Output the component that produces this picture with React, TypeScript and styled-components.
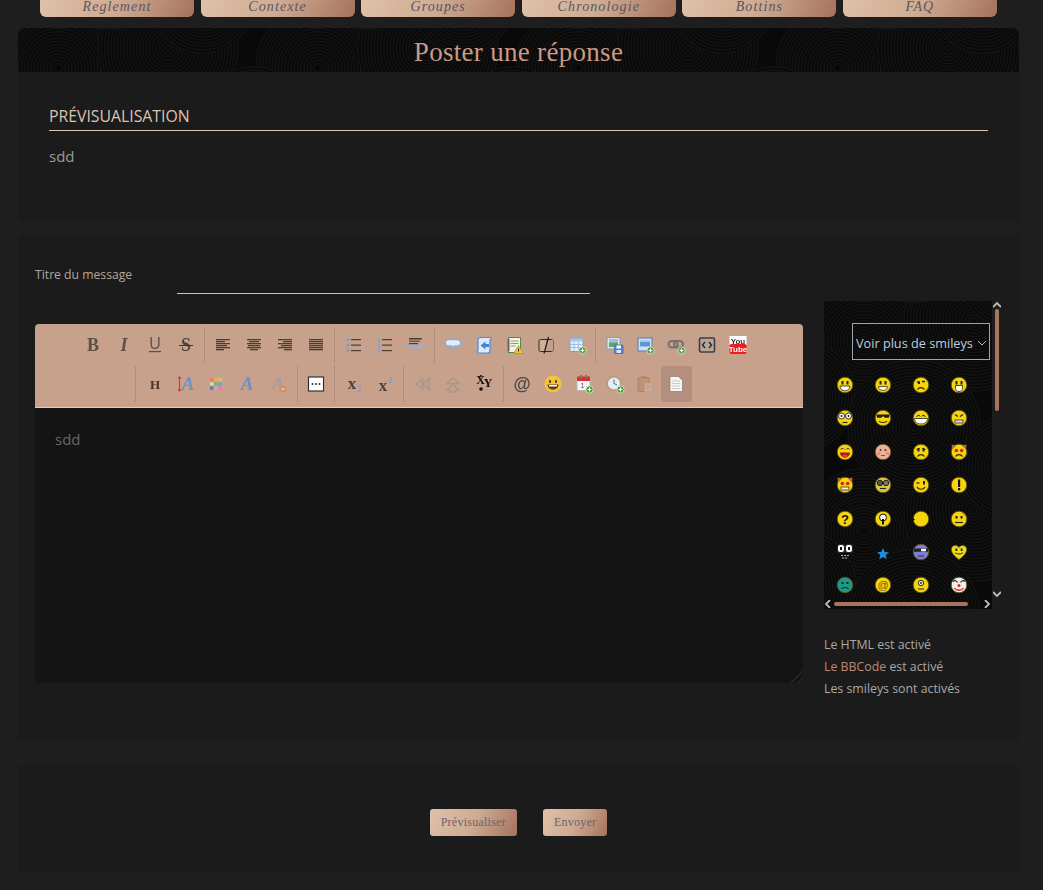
import React from "react";
import styled, { createGlobalStyle, css } from "styled-components";

// fingerprint-like swirls, drawn once and used as a tiled svg background
const swirlTile = (() => {
  const W = 260;
  const H = 190;
  const spots = [
    [40, 40, 62],
    [150, 20, 70],
    [235, 95, 56],
    [90, 125, 66],
    [185, 165, 50],
  ];
  let body = "";
  spots.forEach(([cx, cy, r]) => {
    [-W, 0, W].forEach((dx) => {
      [-H, 0, H].forEach((dy) => {
        body += `<circle cx='${cx + dx}' cy='${cy + dy}' r='${r}' fill='#090909'/>`;
        for (let q = r; q > 2; q -= 3.2) {
          body += `<circle cx='${cx + dx}' cy='${cy + dy}' r='${q}' fill='none' stroke='#141414' stroke-width='1.1'/>`;
        }
      });
    });
  });
  const svg = `<svg xmlns='http://www.w3.org/2000/svg' width='${W}' height='${H}'>${body}</svg>`;
  return `url("data:image/svg+xml,${encodeURIComponent(svg)}")`;
})();

const swirl = css`
  background-color: #090909;
  background-image: ${swirlTile};
`;

const copper = css`
  background: linear-gradient(115deg, #dfc1a9 0%, #cfab93 50%, #a6725c 100%);
`;

const GlobalStyle = createGlobalStyle`
  html, body {
    margin: 0;
    height: 890px;
    overflow: hidden;
    background: #1e1e1e;
    font-family: "Open Sans", "Liberation Sans", sans-serif;
  }
`;

const Page = styled.div`
  margin-top: -7px;
  padding: 0 24px 0 18px;
  display: flex;
  flex-direction: column;
`;

const Nav = styled.nav`
  display: grid;
  grid-template-columns: repeat(6, 154px);
  justify-content: space-between;
  margin: 0 22px 11px;
`;

const NavButton = styled.a`
  ${copper}
  height: 24px;
  border-radius: 0 0 6px 6px;
  text-align: center;
  font: italic 14px/28px "Liberation Serif", serif;
  letter-spacing: 1.1px;
  color: #5a555e;
`;

const Banner = styled.h1`
  ${swirl}
  margin: 0;
  height: 44px;
  border-radius: 6px 6px 0 0;
  text-align: center;
  font: 400 27px/48px "Liberation Serif", serif;
  letter-spacing: 0.3px;
  color: #c99a85;
`;

const Panel = styled.section<{ $height: number; $gap?: number }>`
  height: ${(p) => p.$height}px;
  margin-bottom: ${(p) => p.$gap ?? 0}px;
  background: #1b1b1b;
`;

const PreviewPanel = styled(Panel)`
  padding: 34px 31px 0;
  box-sizing: border-box;
`;

const PreviewTitle = styled.h2`
  margin: 0 0 14px;
  padding-bottom: 4px;
  border-bottom: 1px solid #e0c3ab;
  font-size: 15.8px;
  line-height: 20px;
  font-weight: 400;
  color: #dcc4ae;
`;

const PreviewBody = styled.p`
  margin: 0;
  font-size: 15px;
  line-height: 22px;
  color: #9a9a9a;
`;

const FormPanel = styled(Panel)`
  padding: 31px 17px 0;
  box-sizing: border-box;
`;

const TitleRow = styled.div`
  display: flex;
  align-items: flex-start;
  height: 37px;
`;

const TitleLabel = styled.label`
  width: 142px;
  font-size: 12.2px;
  line-height: 20px;
  color: #b5a89a;
`;

const TitleInput = styled.input`
  width: 413px;
  height: 29px;
  box-sizing: border-box;
  padding: 0;
  border: 0;
  border-bottom: 1px solid #c9c2bb;
  background: transparent;
  outline: none;
`;

const Columns = styled.div`
  display: flex;
  align-items: flex-start;
`;

const Editor = styled.div`
  width: 768px;
  margin-top: 22px;
  margin-right: 21px;
`;

const Toolbar = styled.div`
  height: 84px;
  box-sizing: border-box;
  padding: 3px 8px 0 0;
  background: #c8a18c;
  border-radius: 4px 4px 0 0;
  border-bottom: 1px solid #d9cfc9;
  display: flex;
  flex-direction: column;
  gap: 3px;
`;

const ToolRow = styled.div`
  height: 36px;
  display: flex;
  justify-content: center;
`;

const ToolGroup = styled.div<{ $first?: boolean }>`
  display: flex;
  padding: 0 3px;
  border-left: 1px solid ${(p) => (p.$first ? "transparent" : "#b08d7b")};
`;

const ToolButton = styled.a<{ $active?: boolean }>`
  width: 30.85px;
  height: 36px;
  display: flex;
  align-items: center;
  justify-content: center;
  border-radius: 3px;
  background: ${(p) => (p.$active ? "#b58f7d" : "transparent")};
`;

const Glyph = styled.svg<{ $fade?: number }>`
  width: 20px;
  height: 20px;
  opacity: ${(p) => p.$fade ?? 1};
  filter: blur(0.35px);
`;

const EditorArea = styled.textarea`
  display: block;
  width: 100%;
  height: 275px;
  box-sizing: border-box;
  padding: 22px 20px;
  border: 0;
  outline: none;
  background: #141414;
  color: #666;
  font-family: "Open Sans", sans-serif;
  font-size: 15px;
  line-height: 18px;

  &::-webkit-resizer {
    background: linear-gradient(135deg, transparent 55%, #222 55% 65%, transparent 65% 78%, #222 78% 88%, transparent 88%);
  }
`;

const Side = styled.aside`
  width: 178px;
  margin-top: -1px;
`;

const SmileyFrame = styled.div`
  ${swirl}
  height: 308px;
  display: grid;
  grid-template-columns: 168px 10px;
  grid-template-rows: 297px 11px;
`;

const SmileyPane = styled.div`
  padding: 22px 0 0 0;
  overflow: hidden;
`;

const MoreSelect = styled.div`
  width: 138px;
  height: 37px;
  margin-left: 28px;
  box-sizing: border-box;
  border: 1px solid #a5a5a5;
  padding: 2px 3px 0;
  display: flex;
  align-items: center;
  justify-content: space-between;
  font-size: 12.7px;
  color: #bcd0de;
  white-space: nowrap;
`;

const SmileyGrid = styled.div`
  margin: 17px 0 0 13px;
  display: grid;
  grid-template-columns: repeat(4, 16px);
  grid-auto-rows: 16px;
  column-gap: 22px;
  row-gap: 17.4px;
`;

const SmileySvg = styled.svg`
  width: 18px;
  height: 18px;
  margin: -1px;
  display: block;
`;

const VTrack = styled.div`
  background: #1c1c1c;
  display: flex;
  flex-direction: column;
  align-items: center;
  justify-content: space-between;
`;

const VThumb = styled.div`
  width: 4px;
  height: 102px;
  margin: 0 0 auto;
  border-radius: 2px;
  background: #a8745f;
`;

const HTrack = styled.div`
  display: flex;
  align-items: center;
  padding-right: 1px;
  gap: 2px;
`;

const HThumb = styled.div`
  width: 134px;
  height: 4px;
  border-radius: 2px;
  background: #a8745f;
`;

const Corner = styled.div`
  background: #1c1c1c;
`;

const Arrow = styled.svg<{ $thin?: boolean; $end?: boolean }>`
  width: 8px;
  height: 8px;
  flex: none;
  fill: none;
  stroke: #bdbdbd;
  stroke-width: ${(p) => (p.$thin ? 1 : 1.8)};
  margin-left: ${(p) => (p.$end ? "auto" : "0")};
`;

const Status = styled.div`
  margin-top: 25px;
  font-size: 12.35px;
  line-height: 22px;
  color: #a9a9a9;
`;

const StatusLink = styled.span`
  color: #b98a7a;
`;

const ActionsPanel = styled(Panel)`
  padding-top: 43px;
  box-sizing: border-box;
  display: flex;
  align-items: flex-start;
  justify-content: center;
  gap: 26px;
`;

const ActionButton = styled.button`
  ${copper}
  height: 27px;
  padding: 0 11px;
  border: 0;
  border-radius: 3px;
  font: 400 12px/27px "Liberation Serif", serif;
  letter-spacing: 0.25px;
  color: #6b6468;
`;

const navItems = ["Reglement", "Contexte", "Groupes", "Chronologie", "Bottins", "FAQ"];

const Lines = ({ rows, color = "#4d3d35" }: { rows: [number, number][]; color?: string }) => (
  <>
    {rows.map(([x, w], i) => (
      <rect key={i} x={x} y={4 + i * 2} width={w} height={1.3} fill={color} />
    ))}
  </>
);

const Plus = () => (
  <>
    <circle cx="15.5" cy="15.5" r="3.6" fill="#4f9a3d" stroke="#e8f2e0" strokeWidth=".7" />
    <path d="M13.6 15.5h3.8M15.5 13.6v3.8" stroke="#fff" strokeWidth="1.1" />
  </>
);

const Serif = ({ c, x = 10, y = 15.5, size = 17, italic, color = "#3a3533" }: { c: string; x?: number; y?: number; size?: number; italic?: boolean; color?: string }) => (
  <text x={x} y={y} textAnchor="middle" fontFamily="Liberation Serif, serif" fontWeight="700" fontStyle={italic ? "italic" : "normal"} fontSize={size} fill={color}>
    {c}
  </text>
);

const full: [number, number] = [3, 14];
const alignRows = {
  left: [full, [3, 9], full, [3, 11], full, [3, 8]] as [number, number][],
  center: [full, [5, 10], full, [4, 12], full, [6, 8]] as [number, number][],
  right: [full, [8, 9], full, [6, 11], full, [9, 8]] as [number, number][],
  justify: [full, full, full, full, full, full] as [number, number][],
};

type Tool = { key: string; fade?: number; active?: boolean; draw: React.ReactNode };

const groupsRowOne: Tool[][] = [
  [
    { key: "bold", fade: 0.75, draw: <Serif c="B" size={18} /> },
    { key: "italic", fade: 0.75, draw: <Serif c="I" size={18} italic /> },
    { key: "underline", fade: 0.8, draw: <><text x="10" y="14" textAnchor="middle" fontFamily="Liberation Sans, sans-serif" fontSize="16" fill="#4a4441">U</text><rect x="4" y="16" width="12" height="1.2" fill="#3f3a38" /></> },
    { key: "strike", fade: 0.85, draw: <><Serif c="S" size={18} /><rect x="3" y="10" width="14" height="1" fill="#2a2624" /></> },
  ],
  [
    { key: "left", draw: <Lines rows={alignRows.left} /> },
    { key: "center", draw: <Lines rows={alignRows.center} /> },
    { key: "right", draw: <Lines rows={alignRows.right} /> },
    { key: "justify", draw: <Lines rows={alignRows.justify} /> },
  ],
  [
    { key: "bullets", draw: <><rect x="7" y="4" width="10" height="1.2" fill="#4d3d35" /><rect x="7" y="9.5" width="10" height="1.2" fill="#4d3d35" /><rect x="7" y="15" width="10" height="1.2" fill="#4d3d35" /><circle cx="4" cy="4.6" r="1.5" fill="#7d9bd0" /><circle cx="4" cy="10" r="1.5" fill="#7d9bd0" /><rect x="2.5" y="14" width="3" height="3" fill="#7d9bd0" /></> },
    { key: "numbers", draw: <><rect x="7" y="4" width="10" height="1.2" fill="#4d3d35" /><rect x="7" y="9.5" width="10" height="1.2" fill="#4d3d35" /><rect x="7" y="15" width="10" height="1.2" fill="#4d3d35" /><rect x="3" y="2.5" width="2" height="5" fill="#8aa0c8" /><rect x="3" y="8.5" width="2.4" height="4" fill="#8aa0c8" /><rect x="3" y="14" width="2.4" height="4" fill="#8aa0c8" /></> },
    { key: "rule", draw: <><rect x="3" y="3" width="13" height="1.5" fill="#4d3d35" /><rect x="3" y="5.5" width="11" height="1.5" fill="#6a5a50" /><rect x="3" y="8" width="9" height="1.2" fill="#4d3d35" /><rect x="2" y="10.5" width="15" height="2.6" rx=".6" fill="#8fb3e0" /></> },
  ],
  [
    { key: "quote", draw: <path d="M6 4.500h8c2 0 3.500 1.200 3.500 3.200S16 11 14 11h-2.500L9 14.500V11H6C4 11 2.500 9.700 2.500 7.700S4 4.500 6 4.500z" fill="#e4eefa" stroke="#86aedf" strokeWidth="1.300" /> },
    { key: "script", draw: <><path d="M6 2.500h10c1.500 0 1.500 2.500 0 2.500v11c0 1.400-1 2-2 2H4c-1 0-1.600-1.800 0-2.300V5c0-1.500 1-2.500 2-2.500z" fill="#dce9f8" stroke="#4d8ad4" strokeWidth="1.200" /><path d="M11.500 6.500 6.500 10.500l5 4V12h3.500V9h-3.500z" fill="#3d84dc" /></> },
    { key: "warn", draw: <><rect x="3.5" y="2.5" width="12" height="15" fill="#f2f4e4" stroke="#4f8a50" /><path d="M5.5 6h8M5.5 8.5h8M5.5 11h5" stroke="#8aa070" /><rect x="2.5" y="4" width="2" height="12" fill="#666" /><path d="M13.5 10.5 18.5 18.5h-10z" fill="#e8c830" stroke="#a08a20" strokeWidth=".6" /><rect x="13" y="13.5" width="1" height="3" fill="#333" /></> },
    { key: "note", draw: <><rect x="3" y="4.5" width="14" height="12" rx="1.5" fill="#cfae9a" stroke="#2e2a28" /><rect x="10" y="5" width="7" height="11" fill="#c4a08c" /><path d="M12.5 2 8 18.5" stroke="#1c1a19" strokeWidth="1.2" /></> },
    { key: "table", draw: <><rect x="3" y="3.5" width="13" height="13" fill="#e4eef8" stroke="#7aa0cc" /><rect x="3" y="3.5" width="13" height="3" fill="#a9c6e6" /><path d="M3 9.5h13M3 12.5h13M7 6.5v10M11.5 6.5v10" stroke="#8fb0d0" strokeWidth=".7" /><Plus /></> },
  ],
  [
    { key: "image", draw: <><rect x="2" y="2.5" width="13" height="11.5" fill="#d9e6f0" stroke="#7f9fc0" /><rect x="4" y="4.5" width="9" height="7.5" fill="#6aa060" /><rect x="4" y="4.5" width="9" height="3" fill="#9cc4e4" /><rect x="9.5" y="10" width="8.5" height="8.5" rx=".6" fill="#4d88d0" stroke="#2f5f9f" strokeWidth=".6" /><rect x="11.5" y="10.5" width="4.5" height="3" fill="#fff" /><rect x="11.5" y="15" width="4.5" height="3" fill="#dbe7f4" /></> },
    { key: "picture", draw: <><rect x="3" y="3" width="14" height="13" fill="#cfe0f2" stroke="#4f7fb8" /><rect x="5" y="5" width="10" height="6.5" fill="#5f96d0" /><rect x="5" y="5" width="10" height="2" fill="#a8cdf0" /><Plus /></> },
    { key: "link", draw: <><rect x="2.5" y="6" width="9" height="6.5" rx="3.2" fill="none" stroke="#77706e" strokeWidth="2" /><rect x="8" y="6" width="9" height="6.5" rx="3.2" fill="none" stroke="#77706e" strokeWidth="2" /><Plus /></> },
    { key: "code", draw: <><rect x="2.5" y="3" width="15" height="14" rx="1.5" fill="#b9a598" stroke="#3b3f44" strokeWidth="1.6" /><path d="M8 7 5.5 10 8 13M12 7l2.500 3-2.500 3" fill="none" stroke="#203040" strokeWidth="1.500" /></> },
    { key: "youtube", draw: <><rect x="1.5" y="1" width="17" height="9" fill="#fff" /><text x="10" y="8.6" textAnchor="middle" fontFamily="Liberation Sans, sans-serif" fontWeight="700" fontSize="8" fill="#333">You</text><rect x="1.5" y="9" width="17" height="10" rx="2" fill="#ee1c1c" /><text x="10" y="16.8" textAnchor="middle" fontFamily="Liberation Sans, sans-serif" fontWeight="700" fontSize="8" fill="#fff">Tube</text></> },
  ],
];

const groupsRowTwo: Tool[][] = [
  [
    { key: "heading", draw: <Serif c="H" size={13} y={14.5} color="#4a3529" /> },
    { key: "size", draw: <><Serif c="A" x={12} size={19} italic color="#6d8fd0" /><path d="M3.5 3v14M2 4.5 3.5 3 5 4.5M2 15.5 3.5 17 5 15.5" stroke="#e8302c" strokeWidth="1.1" fill="none" /></> },
    { key: "palette", draw: <>{["#ee7d70", "#eeaa66", "#ddc45a", "#d8dc9c", "#66c078", "#60a8dc", "#5f7fb0", "#d99cc8", "#ee7aa8"].map((c, i) => <rect key={c} x={4 + (i % 3) * 4.2} y={4 + Math.floor(i / 3) * 4.2} width="3.4" height="3.4" fill={c} />)}</> },
    { key: "font", draw: <Serif c="A" size={19} italic color="#6d8fd0" /> },
    { key: "clear", draw: <><Serif c="A" size={19} italic color="#ab9aa0" /><circle cx="15" cy="15" r="3.4" fill="#d98a5a" /><rect x="13.2" y="14.5" width="3.6" height="1" fill="#f3e3d8" /></> },
  ],
  [
    { key: "more", draw: <><rect x="2.5" y="3" width="15" height="14" fill="#fff" stroke="#333" strokeWidth="1.2" /><circle cx="6.5" cy="10" r="1" fill="#333" /><circle cx="10" cy="10" r="1" fill="#333" /><circle cx="13.5" cy="10" r="1" fill="#333" /></> },
  ],
  [
    { key: "sub", draw: <><Serif c="x" x={8} y={14.5} size={17} color="#4a4442" /><Serif c="2" x={15.5} y={18} size={9} color="#7d9bd0" /></> },
    { key: "sup", draw: <><Serif c="x" x={8} y={16.5} size={17} color="#4a4442" /><Serif c="2" x={15.5} y={9} size={9} color="#7d9bd0" /></> },
  ],
  [
    { key: "ltr", fade: 0.6, draw: <path d="M9.5 4 3.5 10l6 6V4zM16 4l-6 6 6 6V4z" fill="none" stroke="#9a9088" strokeWidth="1.5" /> },
    { key: "rtl", fade: 0.6, draw: <path d="M10 3.500 4 9.500h12L10 3.500zM10 10l-6 6h3v2h6v-2h3l-6-6z" fill="none" stroke="#9a9088" strokeWidth="1.500" /> },
    { key: "xy", draw: <><Serif c="X" x={6.500} y={10} size={12} color="#111" /><Serif c="Y" x={14} y={12.500} size={12} color="#111" /><circle cx="7" cy="15" r="1.800" fill="#111" /><circle cx="7" cy="2" r="1" fill="#111" /></> },
  ],
  [
    { key: "at", draw: <text x="10" y="15.500" textAnchor="middle" fontFamily="Liberation Sans, sans-serif" fontWeight="700" fontSize="17.500" fill="#4a4a4a">@</text> },
    { key: "smile", draw: <><circle cx="10" cy="10" r="8.500" fill="#f7c33a" /><ellipse cx="7" cy="7.500" rx="1" ry="1.700" fill="#4a3a20" /><ellipse cx="13" cy="7.500" rx="1" ry="1.700" fill="#4a3a20" /><path d="M4.500 10.500h11c0 3.500-2.500 5-5.500 5s-5.500-1.500-5.500-5z" fill="#5a3d1c" /><path d="M6 11h8v1.500H6z" fill="#fff" /></> },
    { key: "calendar", draw: <><rect x="3" y="3.500" width="13" height="13" fill="#f4f4f4" stroke="#b8b8b8" /><rect x="3" y="2.500" width="13" height="4.500" fill="#dd2c2c" /><rect x="6" y="1" width="2" height="3.500" fill="#777" /><rect x="11" y="1" width="2" height="3.500" fill="#777" /><text x="8.500" y="14" textAnchor="middle" fontFamily="Liberation Sans, sans-serif" fontSize="7" fill="#555">1</text><Plus /></> },
    { key: "clock", draw: <><circle cx="9" cy="9.500" r="6.800" fill="#e4eef7" stroke="#b79a6a" strokeWidth="1.400" /><path d="M9 5.500v4l3 1.500" fill="none" stroke="#5f86b8" strokeWidth="1.200" /><Plus /></> },
    { key: "paste", fade: 0.85, draw: <><rect x="3" y="3.500" width="11" height="14" rx="1" fill="#c09070" stroke="#a87a5c" /><rect x="6" y="2" width="5" height="3" fill="#a98a74" /><rect x="9.500" y="9" width="8" height="9" fill="#d0ae9c" stroke="#b39a8c" strokeWidth=".700" /><path d="M11 12h5M11 14h5" stroke="#ac9284" strokeWidth=".700" /></> },
    { key: "document", active: true, draw: <><path d="M4 2.500h8.500L16.500 6.500V17.500H4z" fill="#f4f4f4" stroke="#8a7a72" strokeWidth=".700" /><path d="M6 7h8M6 9.500h8M6 12h8M6 14.500h8" stroke="#c2c2c2" strokeWidth=".800" /></> },
  ],
];

const Face = ({ fill = "#f5d60a", children }: { fill?: string; children?: React.ReactNode }) => (
  <>
    <circle cx="9" cy="9" r="7.800" fill={fill} stroke="#5d4d12" strokeWidth=".900" />
    {children}
  </>
);

const dots = (
  <>
    <rect x="5.500" y="5" width="2" height="3.500" fill="#222" />
    <rect x="10.500" y="5" width="2" height="3.500" fill="#222" />
  </>
);
const grin = <path d="M4 10h10c0 3-2.300 4.800-5 4.800S4 13 4 10z" fill="#fff" stroke="#222" strokeWidth=".800" />;
const frown = <path d="M5.500 13.500c1.500-2.500 5.500-2.500 7 0" fill="none" stroke="#222" strokeWidth="1.200" />;
const redEyes = (
  <>
    <circle cx="6.300" cy="7.500" r="1.800" fill="#d8201c" />
    <circle cx="11.700" cy="7.500" r="1.800" fill="#d8201c" />
  </>
);
const horns = <path d="M1.500 1.500 2 7 6 2.500zM16.500 1.500 16 7 12 2.500z" fill="#a8703a" />;
const smileyList: React.ReactNode[] = [
  <Face>{dots}{grin}</Face>,
  <Face>{dots}<path d="M4.500 10.500h9c0 2.500-2 4-4.500 4s-4.500-1.500-4.500-4z" fill="#f4f4e8" stroke="#222" strokeWidth=".700" /></Face>,
  <Face><path d="M5 6h3M10 5.500h3" stroke="#222" strokeWidth="1.400" /><rect x="6" y="6" width="2" height="2" fill="#222" />{frown}</Face>,
  <Face>{dots}<path d="M5.500 9.500h7v3c0 1.800-1.500 3-3.500 3s-3.500-1.200-3.500-3z" fill="#fff" stroke="#222" strokeWidth=".800" /></Face>,
  <Face><circle cx="5.500" cy="7" r="3" fill="#fff" stroke="#333" /><circle cx="12.500" cy="7" r="3" fill="#fff" stroke="#333" /><circle cx="5.500" cy="7" r=".900" fill="#111" /><circle cx="12.500" cy="7" r=".900" fill="#111" /><path d="M6.500 13.500h5" stroke="#222" strokeWidth="1.100" /></Face>,
  <Face><path d="M2.500 5.500h13l-.5 3.300H11l-2-1.500-2 1.500H3z" fill="#1c1c1c" /><path d="M5 12c1.500 2 6.500 2 8 0" fill="none" stroke="#222" strokeWidth="1.200" /></Face>,
  <Face><path d="M4.500 7.500 7 6l1 1.500M10 7.500 11 6l2.500 1.500" fill="none" stroke="#222" strokeWidth="1" /><path d="M2.500 9.500h13c0 3.500-3 5.500-6.500 5.500s-6.500-2-6.500-5.500z" fill="#fff" stroke="#222" strokeWidth=".800" /></Face>,
  <Face><path d="M5 5.500 8 7.500M13 5.500 10 7.500" stroke="#222" strokeWidth="1.200" /><rect x="5" y="11" width="8" height="3" fill="#ddd" stroke="#222" strokeWidth=".700" /></Face>,
  <Face><path d="M4.500 6.500c1-1.500 2.500-1.500 3.500 0M10 6.500c1-1.500 2.500-1.500 3.500 0" fill="none" stroke="#222" /><path d="M4 9.500h10c0 2.800-2.300 5-5 5s-5-2.200-5-5z" fill="#a81818" /><ellipse cx="9" cy="13" rx="2.800" ry="1.800" fill="#ee3322" /></Face>,
  <Face fill="#eeb29a"><circle cx="6.500" cy="7" r="1" fill="#333" /><circle cx="11.500" cy="7" r="1" fill="#333" /><circle cx="4.500" cy="10.500" r="1.800" fill="#e88a7c" /><circle cx="13.500" cy="10.500" r="1.800" fill="#e88a7c" /><path d="M7 12.500h4" stroke="#8a4a3a" /></Face>,
  <Face><path d="M4.500 6.500 7.500 5.500M13.500 6.500 10.500 5.500" stroke="#222" strokeWidth="1" />{dots}{frown}</Face>,
  <><Face>{redEyes}{frown}</Face>{horns}</>,
  <><Face>{redEyes}<rect x="5" y="11" width="8" height="3" fill="#eee" stroke="#222" strokeWidth=".700" /></Face>{horns}</>,
  <Face fill="#d8c83c"><circle cx="6" cy="7" r="2.700" fill="#555" stroke="#222" /><circle cx="12" cy="7" r="2.700" fill="#777" stroke="#222" /><path d="M6 12.500h6" stroke="#222" strokeWidth="1.100" /></Face>,
  <Face><path d="M4.500 7h3" stroke="#222" strokeWidth="1.200" /><rect x="11" y="5" width="2" height="3.500" fill="#222" /><path d="M5 11c1.500 3 6.500 3 8 0" fill="none" stroke="#222" strokeWidth="1.200" /></Face>,
  <Face><rect x="8" y="3.500" width="2.200" height="7.500" fill="#111" /><rect x="8" y="12" width="2.200" height="2.400" fill="#111" /></Face>,
  <Face><text x="9" y="14" textAnchor="middle" fontFamily="Liberation Sans, sans-serif" fontWeight="700" fontSize="13" fill="#111">?</text></Face>,
  <Face><circle cx="9" cy="7.500" r="3.500" fill="#f4f4f4" stroke="#111" /><rect x="8" y="9" width="2" height="5.500" fill="#111" /></Face>,
  <Face><path d="M.8 8 3 9.500.8 11z" fill="#111" /></Face>,
  <Face><rect x="5.500" y="6" width="2" height="2.500" fill="#222" /><rect x="10.500" y="6" width="2" height="2.500" fill="#222" /><path d="M5 12.500h8" stroke="#222" strokeWidth="1.200" /><path d="M12.500 3.500l2 1.500" stroke="#a58a20" /></Face>,
  <><rect x="1.500" y="1.500" width="7" height="8" rx="2.500" fill="#fff" stroke="#222" /><rect x="9.500" y="1.500" width="7" height="8" rx="2.500" fill="#fff" stroke="#222" /><rect x="4" y="4" width="2" height="3" fill="#111" /><rect x="12" y="4" width="2" height="3" fill="#111" /><path d="M5 12.500h2M8 12.500h2M11 12.500h2M6 15h2M9 15h2" stroke="#bbb" strokeWidth="1.200" /></>,
  <path d="m9 5 1.700 4 4.300.3-3.300 2.700 1.100 4.200L9 14l-3.800 2.200 1.100-4.200L3 9.300l4.300-.3z" fill="#1e8fe0" />,
  <Face fill="#7d7dd8"><path d="M2 5.500h14v3.300H2z" fill="#222" /><rect x="9" y="5.800" width="5" height="2.500" fill="#fff" /><path d="M6 13h6" stroke="#333" strokeWidth="1.100" /></Face>,
  <><path d="M9 16.500C2 11.500 1 8 1.500 5.500 2.200 2 7 1.500 9 4.500c2-3 6.800-2.500 7.500 1C17 8 16 11.500 9 16.500z" fill="#eedb14" stroke="#6d5a14" strokeWidth=".700" /><rect x="5.500" y="5.500" width="1.800" height="2.500" fill="#222" /><rect x="10.700" y="5.500" width="1.800" height="2.500" fill="#222" /><path d="M5 9.500c1.500 2 6.500 2 8 0" fill="none" stroke="#222" /></>,
  <Face fill="#1f9a82"><rect x="5.500" y="6" width="2" height="2" fill="#123" /><rect x="10.500" y="6" width="2" height="2" fill="#123" /><path d="M5.500 13c1.500-2 5.500-2 7 0" fill="none" stroke="#123" strokeWidth="1.100" /></Face>,
  <Face><text x="9" y="13" textAnchor="middle" fontFamily="Liberation Sans, sans-serif" fontSize="11" fill="#6a5a10">@</text></Face>,
  <Face><circle cx="9" cy="7" r="2.700" fill="#e8e8c0" stroke="#333" /><circle cx="9" cy="7" r="1" fill="#333" /><path d="M6 13h6" stroke="#333" strokeWidth="1.100" /></Face>,
  <Face fill="#eeeeee"><path d="M3 5.500c2-1.500 3.500-1 4.500 1M15 5.500c-2-1.500-3.500-1-4.500 1" fill="none" stroke="#222" strokeWidth="1.100" /><circle cx="9" cy="9.500" r="1.500" fill="#d8201c" /><path d="M4.500 12c2 3 7 3 9 0" fill="none" stroke="#d8201c" strokeWidth="1.300" /></Face>,
];

const renderTools = (groups: Tool[][], firstVisible: boolean) =>
  groups.map((tools, g) => (
    <ToolGroup key={tools[0].key} $first={g === 0 && !firstVisible}>
      {tools.map((t) => (
        <ToolButton key={t.key} $active={t.active} title={t.key}>
          <Glyph viewBox="0 0 20 20" $fade={t.fade}>{t.draw}</Glyph>
        </ToolButton>
      ))}
    </ToolGroup>
  ));

const App: React.FC = () => {
  return (
    <Page>
      <GlobalStyle />
      <Nav>
        {navItems.map((item) => (
          <NavButton key={item}>{item}</NavButton>
        ))}
      </Nav>
      <Banner>Poster une réponse</Banner>
      <PreviewPanel $height={150} $gap={12}>
        <PreviewTitle>PRÉVISUALISATION</PreviewTitle>
        <PreviewBody>sdd</PreviewBody>
      </PreviewPanel>
      <FormPanel $height={506} $gap={26}>
        <TitleRow>
          <TitleLabel>Titre du message</TitleLabel>
          <TitleInput type="text" />
        </TitleRow>
        <Columns>
          <Editor>
            <Toolbar>
              <ToolRow>{renderTools(groupsRowOne, false)}</ToolRow>
              <ToolRow>{renderTools(groupsRowTwo, true)}</ToolRow>
            </Toolbar>
            <EditorArea defaultValue="sdd" />
          </Editor>
          <Side>
            <SmileyFrame>
              <SmileyPane>
                <MoreSelect>
                  Voir plus de smileys
                  <Arrow viewBox="0 0 8 8" $thin><path d="M0 2l4 4 4-4" /></Arrow>
                </MoreSelect>
                <SmileyGrid>
                  {smileyList.map((face, i) => (
                    <SmileySvg key={i} viewBox="0 0 18 18">{face}</SmileySvg>
                  ))}
                </SmileyGrid>
              </SmileyPane>
              <VTrack>
                <Arrow viewBox="0 0 8 8"><path d="M0 6l4-4 4 4" /></Arrow>
                <VThumb />
                <Arrow viewBox="0 0 8 8"><path d="M0 2l4 4 4-4" /></Arrow>
              </VTrack>
              <HTrack>
                <Arrow viewBox="0 0 8 8"><path d="M6 0 2 4l4 4" /></Arrow>
                <HThumb />
                <Arrow viewBox="0 0 8 8" $end><path d="M2 0l4 4-4 4" /></Arrow>
              </HTrack>
              <Corner />
            </SmileyFrame>
            <Status>
              <div>Le HTML est activé</div>
              <div><StatusLink>Le BBCode</StatusLink> est activé</div>
              <div>Les smileys sont activés</div>
            </Status>
          </Side>
        </Columns>
      </FormPanel>
      <ActionsPanel $height={106}>
        <ActionButton>Prévisualiser</ActionButton>
        <ActionButton>Envoyer</ActionButton>
      </ActionsPanel>
    </Page>
  );
};

export default App;
